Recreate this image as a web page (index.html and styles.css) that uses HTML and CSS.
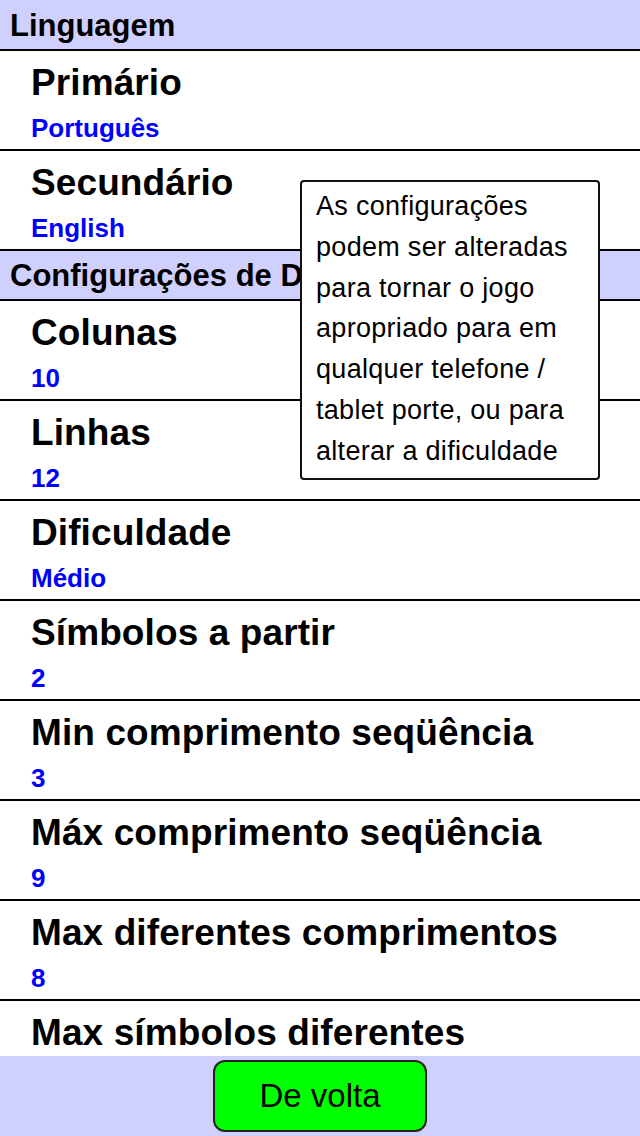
FILE: index.html
```html
<!DOCTYPE html>
<html lang="pt">
<head>
    <meta charset="UTF-8">
    <title>Configurações</title>
    <link rel="stylesheet" href="styles.css">
</head>
<body>
    <div class="lista">
        <div class="cabecalho primeiro">Linguagem</div>
        <div class="item">
            <div class="titulo">Primário</div>
            <div class="valor">Português</div>
        </div>
        <div class="item">
            <div class="titulo">Secundário</div>
            <div class="valor">English</div>
        </div>
        <div class="cabecalho">Configurações de Dificuldade</div>
        <div class="item">
            <div class="titulo">Colunas</div>
            <div class="valor">10</div>
        </div>
        <div class="item">
            <div class="titulo">Linhas</div>
            <div class="valor">12</div>
        </div>
        <div class="item">
            <div class="titulo">Dificuldade</div>
            <div class="valor">Médio</div>
        </div>
        <div class="item">
            <div class="titulo">Símbolos a partir</div>
            <div class="valor">2</div>
        </div>
        <div class="item">
            <div class="titulo">Min comprimento seqüência</div>
            <div class="valor">3</div>
        </div>
        <div class="item">
            <div class="titulo">Máx comprimento seqüência</div>
            <div class="valor">9</div>
        </div>
        <div class="item">
            <div class="titulo">Max diferentes comprimentos</div>
            <div class="valor">8</div>
        </div>
        <div class="item">
            <div class="titulo">Max símbolos diferentes</div>
            <div class="valor">6</div>
        </div>
    </div>
    <div class="rodape">
        <button class="voltar">De volta</button>
    </div>
    <div class="dica">As configurações<br>podem ser alteradas<br>para tornar o jogo<br>apropriado para em<br>qualquer telefone /<br>tablet porte, ou para<br>alterar a dificuldade</div>
</body>
</html>
```

FILE: styles.css
```css
body { margin: 0; height: 1136px; display: flex; flex-direction: column; font-family: "Liberation Sans", Arial, sans-serif; background: #fff; color: #000; overflow: hidden; }
.lista { flex: 1; overflow: hidden; }
.cabecalho { height: 50px; box-sizing: border-box; padding: 8px 10px 0; font-size: 31px; line-height: 34px; font-weight: bold; background: #d0d0ff; border-bottom: 2px solid #000; white-space: nowrap; }
.cabecalho.primeiro { height: 51px; padding-top: 9px; }
.item { height: 100px; box-sizing: border-box; padding: 11px 31px 0; border-bottom: 2px solid #000; white-space: nowrap; }
.titulo { font-size: 37px; line-height: 42px; font-weight: bold; letter-spacing: 0.1px; }
.valor { margin-top: 9px; font-size: 26px; line-height: 30px; font-weight: bold; color: #0000ff; }
.rodape { height: 80px; flex-shrink: 0; background: #d0d0ff; display: flex; justify-content: center; align-items: center; }
.voltar { width: 214px; height: 72px; background: #00ff00; border: 2px solid #222; border-radius: 12px; font-family: "Liberation Sans", Arial, sans-serif; font-size: 33px; color: #000; padding: 0; }
.dica { position: absolute; left: 300px; top: 180px; width: 300px; height: 300px; box-sizing: border-box; padding: 4px 14px; background: #fff; border: 2px solid #111; border-radius: 4px; font-size: 27px; line-height: 40.8px; letter-spacing: 0.3px; white-space: nowrap; }
```
